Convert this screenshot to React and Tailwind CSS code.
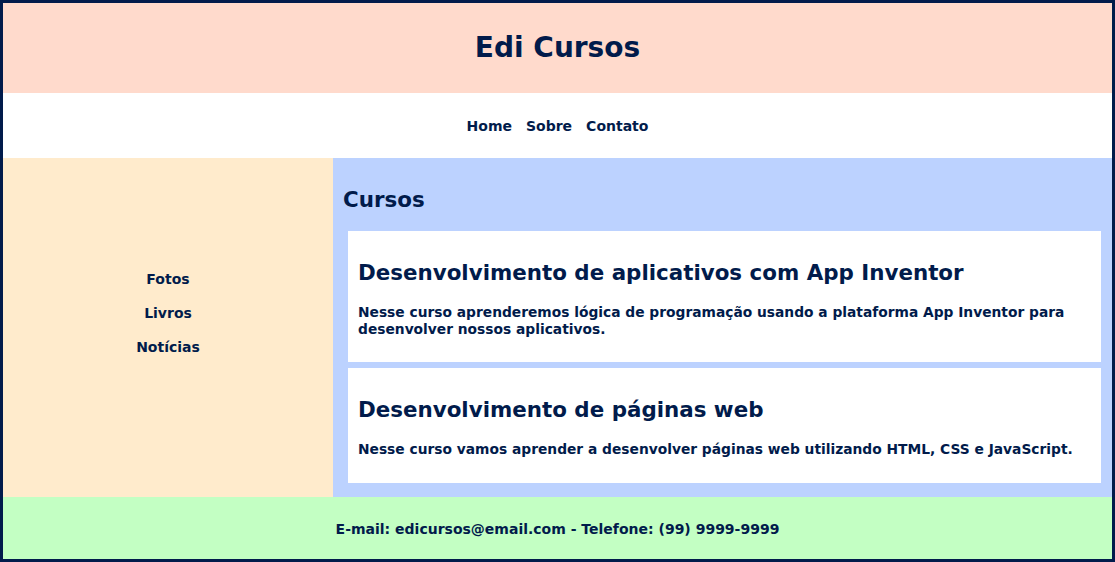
import React from 'react';

const courses = [
  {
    title: 'Desenvolvimento de aplicativos com App Inventor',
    text: 'Nesse curso aprenderemos lógica de programação usando a plataforma App Inventor para desenvolver nossos aplicativos.',
  },
  {
    title: 'Desenvolvimento de páginas web',
    text: 'Nesse curso vamos aprender a desenvolver páginas web utilizando HTML, CSS e JavaScript.',
  },
];

const App = () => {
  return (
    <div
      className="flex flex-col h-[562px] border-[3px] border-[#011b4b] font-bold text-[#011b4b] text-[14px]"
      style={{ fontFamily: '"DejaVu Sans", Verdana, sans-serif' }}
    >
      {/* Header */}
      <header className="h-[90px] flex items-center justify-center bg-[#ffdacc]">
        <h1 className="text-[28px] leading-none">Edi Cursos</h1>
      </header>

      {/* Nav */}
      <nav className="h-[65px] flex items-center justify-center gap-[14px] pt-[2px] bg-white">
        <a>Home</a>
        <a>Sobre</a>
        <a>Contato</a>
      </nav>

      {/* Main */}
      <div className="flex flex-1">
        <aside className="w-[330px] bg-[#ffebcc] flex flex-col items-center pt-[113px] gap-[18px] leading-[16px]">
          <a>Fotos</a>
          <a>Livros</a>
          <a>Notícias</a>
        </aside>

        <main className="flex-1 bg-[#bcd2ff] pt-[30px] pl-[10px] pr-[11px] pb-[14px]">
          <h2 className="text-[21.4px] leading-[24px]">Cursos</h2>
          <div className="mt-[19px] ml-[5px] flex flex-col gap-[6px]">
            {courses.map((c) => (
              <section key={c.title} className="bg-white pl-[10px] pr-[10px] pt-[30px] pb-[25px]">
                <h2 className="text-[21.4px] leading-[24px]">{c.title}</h2>
                <p className="mt-[19px] text-[13.8px] leading-[16.5px]">{c.text}</p>
              </section>
            ))}
          </div>
        </main>
      </div>

      {/* Footer */}
      <footer className="h-[62px] flex items-center justify-center pt-[3px] bg-[#c3ffc3]">
        E-mail: edicursos@email.com - Telefone: (99) 9999-9999
      </footer>
    </div>
  );
};

export default App;
